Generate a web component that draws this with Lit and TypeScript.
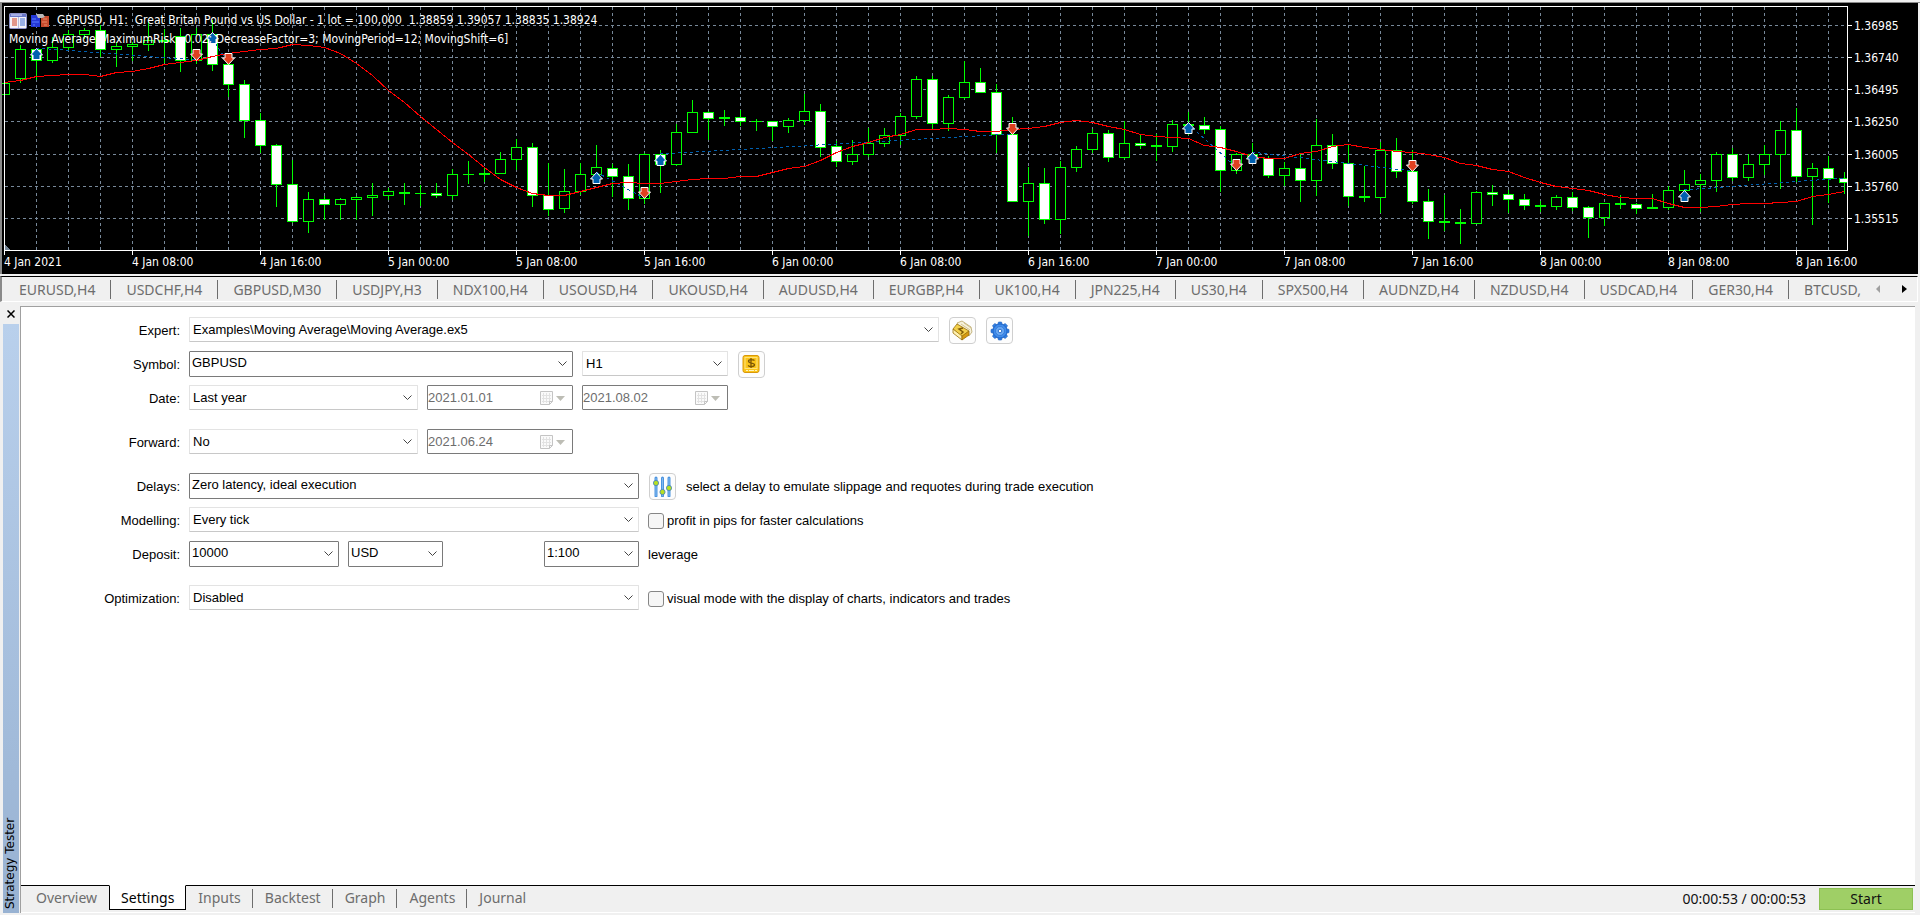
import { LitElement, html, svg, css } from "lit";
import { customElement, property } from "lit/decorators.js";
import { classMap } from "lit/directives/class-map.js";

/* ---------- chart data: [high, body top, body bottom, low, falling] ---------- */
type Bar = [number, number, number, number, number];
const BARS: Bar[] = [
  [83, 83, 94, 94, 0], [45, 49, 78, 82, 0], [48, 49, 60, 79, 1], [37, 47, 60, 62, 0], [30, 34, 47, 50, 0],
  [28, 30, 34, 38, 0], [25, 30, 49, 56, 1], [42, 46, 49, 66, 0], [42, 44, 46, 60, 0], [20, 40, 44, 50, 0],
  [29, 40, 41, 62, 0], [28, 36, 60, 71, 1], [28, 34, 60, 63, 0], [20, 34, 64, 70, 1], [63, 64, 84, 96, 1],
  [80, 84, 120, 137, 1], [113, 120, 145, 152, 1], [144, 145, 184, 206, 1], [160, 184, 221, 222, 1],
  [192, 199, 221, 232, 0], [196, 199, 204, 219, 1], [198, 199, 204, 219, 0], [196, 197, 199, 219, 0],
  [183, 195, 197, 215, 0], [188, 191, 195, 199, 0], [183, 192, 193, 204, 0], [185, 193, 193, 205, 0],
  [183, 193, 195, 197, 1], [169, 174, 195, 199, 0], [161, 174, 174, 183, 0], [168, 173, 174, 181, 0],
  [152, 159, 173, 173, 0], [139, 147, 159, 169, 0], [143, 147, 195, 206, 1], [163, 195, 209, 215, 1],
  [169, 191, 208, 212, 0], [163, 174, 191, 194, 0], [145, 167, 174, 180, 0], [164, 168, 176, 196, 1],
  [164, 176, 198, 209, 1], [153, 154, 198, 203, 0], [150, 154, 164, 192, 1], [124, 132, 164, 165, 0],
  [100, 112, 132, 132, 0], [111, 112, 118, 139, 1], [110, 117, 118, 125, 0], [110, 117, 121, 125, 1],
  [119, 121, 121, 130, 0], [121, 121, 126, 140, 1], [118, 120, 126, 132, 0], [94, 111, 120, 124, 0],
  [104, 111, 147, 156, 1], [141, 146, 161, 166, 1], [140, 154, 161, 164, 0], [128, 143, 154, 156, 0],
  [128, 135, 143, 146, 0], [113, 116, 135, 144, 0], [76, 79, 116, 118, 0], [76, 79, 123, 128, 1],
  [95, 97, 123, 130, 0], [61, 82, 97, 98, 0], [68, 82, 92, 92, 1], [84, 92, 134, 152, 1],
  [117, 134, 201, 201, 1], [167, 183, 201, 235, 0], [168, 183, 219, 223, 1], [161, 167, 219, 233, 0],
  [146, 149, 167, 171, 0], [129, 133, 149, 152, 0], [130, 133, 157, 161, 1], [121, 143, 157, 158, 0],
  [134, 143, 145, 148, 1], [134, 145, 146, 160, 0], [120, 124, 146, 151, 0], [112, 124, 125, 134, 0],
  [117, 125, 129, 133, 1], [126, 129, 170, 191, 1], [153, 154, 170, 173, 0], [143, 154, 158, 160, 1],
  [156, 158, 175, 177, 1], [162, 168, 175, 185, 0], [154, 168, 180, 201, 1], [119, 145, 180, 195, 0],
  [134, 145, 163, 168, 1], [145, 163, 196, 205, 1], [166, 196, 197, 201, 0], [142, 150, 197, 212, 0],
  [138, 150, 171, 177, 1], [150, 171, 201, 203, 1], [189, 201, 221, 238, 1], [195, 221, 222, 230, 0],
  [209, 222, 223, 243, 0], [191, 192, 223, 223, 0], [185, 192, 194, 205, 1], [190, 194, 199, 212, 1],
  [194, 199, 205, 209, 1], [201, 205, 206, 211, 0], [195, 197, 206, 209, 0], [192, 197, 207, 210, 1],
  [206, 207, 217, 237, 1], [203, 203, 217, 225, 0], [195, 203, 204, 208, 0], [203, 204, 208, 213, 1],
  [194, 207, 208, 208, 0], [186, 190, 207, 209, 0], [170, 184, 190, 191, 0], [174, 180, 184, 211, 0],
  [152, 154, 180, 191, 0], [148, 154, 177, 180, 1], [154, 164, 177, 180, 0], [145, 154, 164, 174, 0],
  [121, 130, 154, 188, 0], [108, 130, 176, 181, 1], [163, 168, 176, 224, 0], [156, 168, 178, 202, 1],
  [172, 178, 182, 193, 1],
];

/* moving average, one value per bar */
const AVERAGE = [
  82, 80, 76, 75, 74, 74, 76, 72, 71, 68, 64, 62, 60, 56, 53, 51, 49, 48, 44, 45, 47, 53, 63, 75, 90, 102, 116,
  129, 142, 154, 167, 179, 187, 193, 195, 195, 191, 187, 183, 182, 183, 183, 181, 179, 178, 178, 176, 176, 172,
  168, 166, 160, 152, 146, 142, 137, 134, 129, 129, 128, 129, 131, 131, 129, 128, 126, 122, 120, 122, 126, 129,
  134, 136, 137, 138, 145, 147, 151, 156, 158, 158, 153, 151, 146, 144, 147, 149, 151, 152, 154, 157, 163, 165,
  169, 171, 177, 182, 186, 188, 190, 194, 197, 198, 198, 203, 207, 207, 206, 204, 203, 203, 202, 201, 196, 194,
  191,
];

/* deals: [bar, y] pairs joined by dotted lines */
const DEAL_LINES = [
  [2, 48, 12, 60], [13, 38, 14, 63], [37, 172, 40, 198], [41, 154, 63, 134], [74, 124, 77, 167], [78, 152, 88, 171],
  [105, 190, 115, 178],
];
const BUYS = [[2, 48], [13, 32], [37, 172], [41, 154], [74, 122], [78, 152], [105, 190]];
const SELLS = [[12, 60], [14, 64], [40, 198], [63, 134], [77, 170], [88, 171]];

const PRICES: [string, number][] = [
  ["1.36985", 25], ["1.36740", 57], ["1.36495", 89], ["1.36250", 121], ["1.36005", 154], ["1.35760", 186], ["1.35515", 218],
];
const TIMES = [
  "4 Jan 2021", "4 Jan 08:00", "4 Jan 16:00", "5 Jan 00:00", "5 Jan 08:00", "5 Jan 16:00", "6 Jan 00:00", "6 Jan 08:00",
  "6 Jan 16:00", "7 Jan 00:00", "7 Jan 08:00", "7 Jan 16:00", "8 Jan 00:00", "8 Jan 08:00", "8 Jan 16:00",
];
const STEP = 16;
const LEFT = 4;
const barX = (i: number) => LEFT + i * STEP;

@customElement("price-chart")
export class PriceChart extends LitElement {
  static styles = css`
    :host { display: block; position: relative; background: #000; color: #fff; font: 12px/19px "DejaVu Sans Condensed", "Noto Sans", sans-serif; }
    .chart { display: grid; grid-template-columns: minmax(0, 1fr) 70px; height: 271px; }
    svg { display: block; }
    .plot, .axis { width: 100%; height: 271px; overflow: visible; }
    .caption { position: absolute; left: 7px; top: 8px; margin: 0; font-weight: 400; }
    .title { display: flex; align-items: center; height: 19px; gap: 3px; }
    .title span { margin-left: 4px; white-space: pre; }
    .inputs { white-space: pre; }
    text { fill: #fff; }
    .grid { stroke: #778899; stroke-dasharray: 3 3; }
    .frame { stroke: #fff; fill: none; }
    .wick { stroke: #0f0; }
    .body { stroke: #0f0; fill: #000; }
    .body.falling { fill: #fff; }
    .average { fill: none; stroke: #f00; }
    .deal { stroke: #0060b0; stroke-dasharray: 3 3; }
    .buy { fill: #0060b0; stroke: #fff; }
    .sell { fill: #e04020; stroke: #fff; }
  `;

  private bar = ([high, top, bottom, low, falling]: Bar, i: number) => {
    const x = barX(i);
    return svg`
      <path class="wick" d="M${x + 0.5} ${high}V${low + 1}" />
      ${top === bottom
        ? svg`<path class="wick" d="M${x - 5} ${top + 0.5}h11" />`
        : svg`<rect class=${classMap({ body: true, falling: !!falling })} x=${x - 4.5} y=${top + 0.5} width="10" height=${bottom - top} />`}`;
  };

  render() {
    return html`
      <div class="chart">
        <svg class="plot" role="img" aria-label="GBPUSD hourly candles">
          <svg width="100%" height="248">
            <g transform="translate(-2 -3)" shape-rendering="crispEdges">
              ${PRICES.map(([, y]) => svg`<path class="grid" d="M5 ${y + 0.5}H4000" />`)}
              ${Array.from({ length: 60 }, (_, i) => svg`<path class="grid" d="M${36.5 + i * 32} 7V250" />`)}
              ${BARS.map(this.bar)}
              ${DEAL_LINES.map(([a, ya, b, yb]) => svg`<path class="deal" d="M${barX(a)} ${ya}L${barX(b)} ${yb}" />`)}
              <polyline class="average" points=${AVERAGE.map((y, i) => `${barX(i) + 0.5},${y + 0.5}`).join(" ")} />
              <path d="M5 245l5 5H5z" fill="#778899" />
            </g>
            <g transform="translate(-2 -3)">
              ${BUYS.map(([i, y]) => svg`<path class="buy" transform="translate(${barX(i) + 0.5} ${y + 0.5})" d="M0 0L6 6.500H3.500V11H-3.500V6.500H-6z" />`)}
              ${SELLS.map(([i, y]) => svg`<path class="sell" transform="translate(${barX(i) + 0.5} ${y + 0.5})" d="M0 0L6 -6.500H3.500V-11H-3.500V-6.500H-6z" />`)}
            </g>
          </svg>
          <path class="frame" d="M2.500 3V251" />
          <line class="frame" x1="2" x2="100%" y1="3.500" y2="3.500" />
          <line class="frame" x1="2" x2="100%" y1="247.500" y2="247.500" />
          ${TIMES.map((label, i) => svg`
            <path class="frame" d="M${2.5 + i * 128} 248v4" />
            <text x=${2 + i * 128} y="263">${label}</text>`)}
        </svg>
        <svg class="axis" aria-hidden="true">
          <path class="frame" d="M-.500 3V248" />
          ${PRICES.map(([label, y]) => svg`
            <path class="frame" d="M0 ${y - 2.5}h4" />
            <text x="6" y=${y + 2}>${label}</text>`)}
        </svg>
      </div>
      <div class="caption">
        <div class="title">
          <svg width="18" height="16" viewBox="0 0 18 16">
            <rect x=".5" y=".5" width="17" height="15" rx="1" fill="#f4f2f6" stroke="#8d93c9" />
            <path d="M1 1h16v3H1z" fill="#6a78c8" /><path d="M2 2h11" stroke="#dfe3ff" />
            <path d="M3 6h5M3 8h5M3 10h5M3 12h5" stroke="#dd7a66" stroke-width="1.500" /><path d="M11 6h5M11 8h5M11 10h5M11 12h5" stroke="#7c9ade" stroke-width="1.500" />
            <path d="M9.500 4v11" stroke="#b9bddb" />
          </svg>
          <svg width="20" height="16" viewBox="0 0 20 16">
            <path d="M1 2h6l3 3v9H1z" fill="#2438d8" /><path d="M11 3h8v11h-8z" fill="#c64a2c" />
            <path d="M6 1h7l2 3-3 1H8z" fill="#b9b9b9" /><path d="M2 6h4M2 9h7M3 12h2" stroke="#5a7cff" /><path d="M13 6h4M12 9h5M14 12h3" stroke="#e88a66" />
          </svg>
          <span>GBPUSD, H1:  Great Britan Pound vs US Dollar - 1 lot = 100,000  1.38859 1.39057 1.38835 1.38924</span>
        </div>
        <div class="inputs">Moving Average[MaximumRisk=0.02; DecreaseFactor=3; MovingPeriod=12; MovingShift=6]</div>
      </div>
    `;
  }
}

/* ---------- form controls ---------- */
const controlStyles = css`
  .control { display: grid; height: 24px; flex: none; }
  .control > * { grid-area: 1 / 1; }
  .control select, .control input {
    box-sizing: border-box; width: 100%; height: 100%; margin: 0; padding: 1px 20px 0 3px; border: 1px solid #e3e3e3; border-bottom-color: #c8c8c8;
    border-radius: 1px; background: #fff; color: #000; font: inherit; line-height: 22px; appearance: none; outline: 0;
  }
  .control.editable select { border-color: #7a7a7a; padding: 0 20px 2px 2px; }
  .control.date { height: 25px; }
  .control.date input { border-color: #7a7a7a; padding: 0 30px 1px 0; color: #6d6d6d; -webkit-text-fill-color: #6d6d6d; }
  .control svg { justify-self: end; align-self: center; margin-right: 6px; pointer-events: none; }
  .control.date svg { margin-right: 8px; }
  .w-expert { width: 750px; }
  .w-wide { width: 450px; }
  .w-symbol { width: 384px; }
  .w-medium { width: 229px; }
  .w-date { width: 146px; }
  .w-deposit { width: 150px; }
  .w-short { width: 95px; }
`;

@customElement("tester-settings")
export class TesterSettings extends LitElement {
  static styles = [
    controlStyles,
    css`
      :host { display: block; padding: 10px 0; font: 13px/16px "Liberation Sans", Arial, sans-serif; color: #000; }
      form { display: grid; row-gap: 10px; }
      .row { display: grid; grid-template-columns: 159px minmax(0, 1fr); column-gap: 9px; height: 24px; }
      .spaced { margin-top: 10px; }
      .name { text-align: right; line-height: 28px; white-space: nowrap; }
      .fields { display: flex; align-items: flex-start; gap: 9px; }
      .tool { box-sizing: border-box; flex: none; width: 27px; height: 27px; padding: 0; border: 1px solid #cfcfcf; border-radius: 4px; background: #fdfdfd; display: grid; place-items: center; }
      .tool.near { margin-left: 1px; }
      .note { line-height: 28px; white-space: nowrap; }
      .push { margin-left: auto; }
      .money { display: flex; gap: 9px; width: 450px; }
      .check { display: flex; align-items: center; gap: 3px; height: 28px; white-space: nowrap; }
      .check input { box-sizing: border-box; width: 16px; height: 16px; margin: 0; appearance: none; border: 1px solid #868686; border-radius: 3px; background: #f6f6f6; }
      .hint { margin-left: 1px; }
    `,
  ];

  private chevron = html`<svg width="9" height="6" viewBox="0 0 9 6" aria-hidden="true"><path d="M.5 .5l4 4 4-4" fill="none" stroke="#444" /></svg>`;

  private combo(id: string, value: string, width: string, label = "", editable = false) {
    return html`<div class=${classMap({ control: true, editable, [width]: true })}>
      <select id=${id} aria-label=${label || id}><option>${value}</option></select>${this.chevron}
    </div>`;
  }

  private date(id: string, value: string, label: string) {
    return html`<div class="control date w-date">
      <input id=${id} type="text" .value=${value} aria-label=${label} disabled />
      <svg width="26" height="16" viewBox="0 0 26 16" aria-hidden="true">
        <path d="M1.500 1.500h12v10l-3 3h-9z" fill="#fafafa" stroke="#c4c4c4" />
        <path d="M3 5.500h9M3 8.500h9M3 11.500h8M4.500 3v10M7.500 3v10M10.500 3v10" stroke="#e2e2e2" />
        <path d="M13.500 11.500h-3v3" fill="none" stroke="#c4c4c4" />
        <path d="M17 6h9l-4.500 5z" fill="#bdbdb5" />
      </svg>
    </div>`;
  }

  render() {
    return html`
      <form @submit=${(e: Event) => e.preventDefault()}>
        <div class="row">
          <label class="name" for="expert">Expert:</label>
          <div class="fields">
            ${this.combo("expert", "Examples\\Moving Average\\Moving Average.ex5", "w-expert", "Expert")}
            <button class="tool near" type="button" aria-label="Open expert in editor">
              <svg width="21" height="21" viewBox="0 0 21 21">
                <path d="M5 3l5-2 9 6 1 5-3 4-9-7z" fill="#f6f1de" stroke="#b8a566" stroke-width=".8" />
                <path d="M9 4l9 6M12 3l7 5" stroke="#cdbb80" stroke-width=".8" />
                <path d="M1 9l4-5 12 7-7 6z" fill="#f2cf4a" stroke="#98700c" stroke-width=".8" />
                <path d="M1 9v4l9 7v-4z" fill="#fff1b0" stroke="#98700c" stroke-width=".8" />
                <path d="M10 16l7-5v4l-7 5z" fill="#d79a10" stroke="#98700c" stroke-width=".8" />
                <path d="M11 8l-4 1 4 3-2 2" fill="none" stroke="#805c08" stroke-width="1.500" />
              </svg>
            </button>
            <button class="tool near" type="button" aria-label="Expert properties">
              <svg width="20" height="20" viewBox="0 0 20 20">
                <g fill="#2f7de0" stroke="#1d5fc0" stroke-width=".6">
                  ${[0, 45, 90, 135, 180, 225, 270, 315].map((a) => svg`<path d="M7.500 4l1-3h3l1 3z" transform="rotate(${a} 10 10)" />`)}
                </g>
                <circle cx="10" cy="10" r="7" fill="#3f8cec" stroke="#2468c8" />
                <circle cx="10" cy="10" r="4.500" fill="#6aa9f4" stroke="#2c70cc" stroke-width=".7" />
                <circle cx="10" cy="10" r="1.800" fill="#fff" stroke="#2c70cc" />
              </svg>
            </button>
          </div>
        </div>

        <div class="row">
          <label class="name" for="symbol">Symbol:</label>
          <div class="fields">
            ${this.combo("symbol", "GBPUSD", "w-symbol", "Symbol", true)}
            ${this.combo("period", "H1", "w-date", "Timeframe")}
            <button class="tool near" type="button" aria-label="Symbol specification">
              <svg width="19" height="21" viewBox="0 0 19 21">
                <rect x="1" y="1.500" width="16" height="17" rx="2" fill="#fbc51a" stroke="#d9980a" />
                <rect x="3" y="3.500" width="12" height="11" fill="none" stroke="#ffe27a" />
                <path d="M12.500 6.500c-1-1-6-1.500-6 .800s6 1.200 6 3.500-5 2-6.500.700M9 4v10" fill="none" stroke="#7d5606" stroke-width="1.300" />
                <path d="M4 16.500h2M7 16.500h5M13 16.500h2" stroke="#fff3c0" />
              </svg>
            </button>
          </div>
        </div>

        <div class="row">
          <label class="name" for="date">Date:</label>
          <div class="fields">
            ${this.combo("date", "Last year", "w-medium", "Date")}
            ${this.date("from", "2021.01.01", "Date from")}
            ${this.date("to", "2021.08.02", "Date to")}
          </div>
        </div>

        <div class="row spaced">
          <label class="name" for="forward">Forward:</label>
          <div class="fields">
            ${this.combo("forward", "No", "w-medium", "Forward")}
            ${this.date("forward-date", "2021.06.24", "Forward date")}
          </div>
        </div>

        <div class="row spaced">
          <label class="name" for="delays">Delays:</label>
          <div class="fields">
            ${this.combo("delays", "Zero latency, ideal execution", "w-wide", "Delays", true)}
            <button class="tool near" type="button" aria-label="Delay settings">
              <svg width="21" height="21" viewBox="0 0 21 21">
                <path d="M4 2v18M10.500 2v18M17 2v18" stroke="#4b94e0" stroke-width="3" stroke-linecap="round" />
                <path d="M4 2v18M10.500 2v18M17 2v18" stroke="#a8d0f8" stroke-width=".6" />
                <g fill="#b8e020" stroke="#3f7fc0" stroke-width=".8"><circle cx="4" cy="7" r="2.600" /><circle cx="10.500" cy="16" r="2.600" /><circle cx="17" cy="12" r="2.600" /></g>
              </svg>
            </button>
            <span class="note hint">select a delay to emulate slippage and requotes during trade execution</span>
          </div>
        </div>

        <div class="row">
          <label class="name" for="modelling">Modelling:</label>
          <div class="fields">
            ${this.combo("modelling", "Every tick", "w-wide", "Modelling")}
            <label class="check"><input type="checkbox" />profit in pips for faster calculations</label>
          </div>
        </div>

        <div class="row">
          <label class="name" for="deposit">Deposit:</label>
          <div class="fields">
            <div class="money">
              ${this.combo("deposit", "10000", "w-deposit", "Deposit", true)}
              ${this.combo("currency", "USD", "w-short", "Currency", true)}
              <span class="push"></span>
              ${this.combo("leverage", "1:100", "w-short", "Leverage", true)}
            </div>
            <label class="note" for="leverage">leverage</label>
          </div>
        </div>

        <div class="row spaced">
          <label class="name" for="optimization">Optimization:</label>
          <div class="fields">
            ${this.combo("optimization", "Disabled", "w-wide", "Optimization")}
            <label class="check"><input type="checkbox" />visual mode with the display of charts, indicators and trades</label>
          </div>
        </div>
      </form>
    `;
  }
}

/* ---------- shell ---------- */
const CHARTS = [
  "EURUSD,H4", "USDCHF,H4", "GBPUSD,M30", "USDJPY,H3", "NDX100,H4", "USOUSD,H4", "UKOUSD,H4", "AUDUSD,H4", "EURGBP,H4",
  "UK100,H4", "JPN225,H4", "US30,H4", "SPX500,H4", "AUDNZD,H4", "NZDUSD,H4", "USDCAD,H4", "GER30,H4", "BTCUSD,",
];
const PAGES = ["Overview", "Settings", "Inputs", "Backtest", "Graph", "Agents", "Journal"];

@customElement("app-root")
export class AppRoot extends LitElement {
  @property() page = "Settings";

  static styles = css`
    :host { display: flex; flex-direction: column; min-height: 100vh; background: #f0f0f0; font: 14px/20px "Noto Sans", sans-serif; }
    button { margin: 0; padding: 0; border: 0; background: none; font: inherit; color: inherit; }
    .edge { height: 2px; border-bottom: 1px solid #8a8a8a; }
    .window { margin-right: 2px; border-left: 2px solid #8a8a8a; }
    .charts { display: flex; align-items: center; height: 24px; margin: 2px 2px 0 0; border: 1px solid #fff; border-top-color: #000; border-left: 2px solid #8a8a8a; color: #6d6d6d; }
    .strip { display: flex; flex: 1; min-width: 0; overflow: hidden; }
    .strip button { flex: none; height: 19px; line-height: 19px; padding: 0 15px; border-right: 1px solid #6d6d6d; }
    .strip button:first-child { padding-left: 17px; }
    .strip button:last-child { border-right: 0; padding-right: 0; }
    .scroll { display: flex; gap: 22px; padding: 0 10px 0 8px; color: #000; }
    .scroll svg { display: block; }
    .tester { flex: 1; display: grid; grid-template-columns: 17px minmax(0, 1fr); margin: 4px 5px 2px 3px; }
    .rail { display: flex; flex-direction: column; align-items: flex-start; }
    .close { box-sizing: border-box; width: 15px; height: 18px; padding-bottom: 3px; display: grid; place-items: center; }
    .handle { box-sizing: border-box; flex: 1; width: 16px; padding-top: 4px; background: linear-gradient(#98b2d2, #b9d0ec); writing-mode: vertical-rl; transform: rotate(180deg); font: 12px/14px "DejaVu Sans", sans-serif; white-space: nowrap; }
    .panel { display: flex; flex-direction: column; border: 1px solid #a0a0a0; border-width: 1px 0 0 1px; background: #fff; }
    tester-settings { flex: 1; }
    .pages { display: flex; align-items: flex-start; height: 27px; background: #f0f0f0; color: #6d6d6d; border-bottom: 1px solid #fff; }
    .pages .tab { box-sizing: border-box; height: 27px; padding: 0 12px 4px; position: relative; border-top: 1px solid #000; line-height: 19px; }
    .pages .tab span { display: block; }
    .pages .tab.first { padding-left: 15px; }
    .pages .tab.ruled::after { content: ""; position: absolute; right: 0; top: 3px; height: 19px; border-right: 1px solid #6d6d6d; }
    .pages .tab.current { height: 25px; padding: 0 11px 1px; border: 1px solid #000; border-top-color: #fff; background: #fff; color: #000; }
    .fill { flex: 1; display: flex; justify-content: flex-end; align-items: flex-start; gap: 13px; height: 27px; box-sizing: border-box; border-top: 1px solid #000; padding: 2px 2px 0 0; color: #111; }
    .clock { line-height: 22px; }
    .start { box-sizing: border-box; width: 94px; height: 22px; border: 1px solid #8cc152; background: #9fcf66; line-height: 20px; }
  `;

  render() {
    return html`
      <div class="edge"></div>
      <price-chart class="window"></price-chart>
      <nav class="charts" aria-label="Charts">
        <div class="strip">${CHARTS.map((c) => html`<button type="button">${c}</button>`)}</div>
        <div class="scroll">
          <button type="button" aria-label="Scroll left"><svg width="5" height="8"><path d="M5 0v8L1 4z" fill="#a0a0a0" /></svg></button>
          <button type="button" aria-label="Scroll right"><svg width="5" height="8"><path d="M0 0v8l5-4z" fill="#000" /></svg></button>
        </div>
      </nav>
      <section class="tester" aria-label="Strategy Tester">
        <div class="rail">
          <button class="close" type="button" aria-label="Close">
            <svg width="8" height="8" viewBox="0 0 8 8"><path d="M.5 .5l7 7M7.500 .5l-7 7" stroke="#000" stroke-width="1.500" /></svg>
          </button>
          <div class="handle">Strategy Tester</div>
        </div>
        <div class="panel">
          <tester-settings></tester-settings>
          <div class="pages">
            ${PAGES.map((p, i) => html`<button type="button"
              class=${classMap({ tab: true, first: i === 0, current: p === this.page, ruled: i > 1 && i < PAGES.length - 1 })}
              @click=${() => (this.page = p)}><span>${p}</span></button>`)}
            <div class="fill">
              <span class="clock">00:00:53 / 00:00:53</span>
              <button class="start" type="button">Start</button>
            </div>
          </div>
        </div>
      </section>
    `;
  }
}
